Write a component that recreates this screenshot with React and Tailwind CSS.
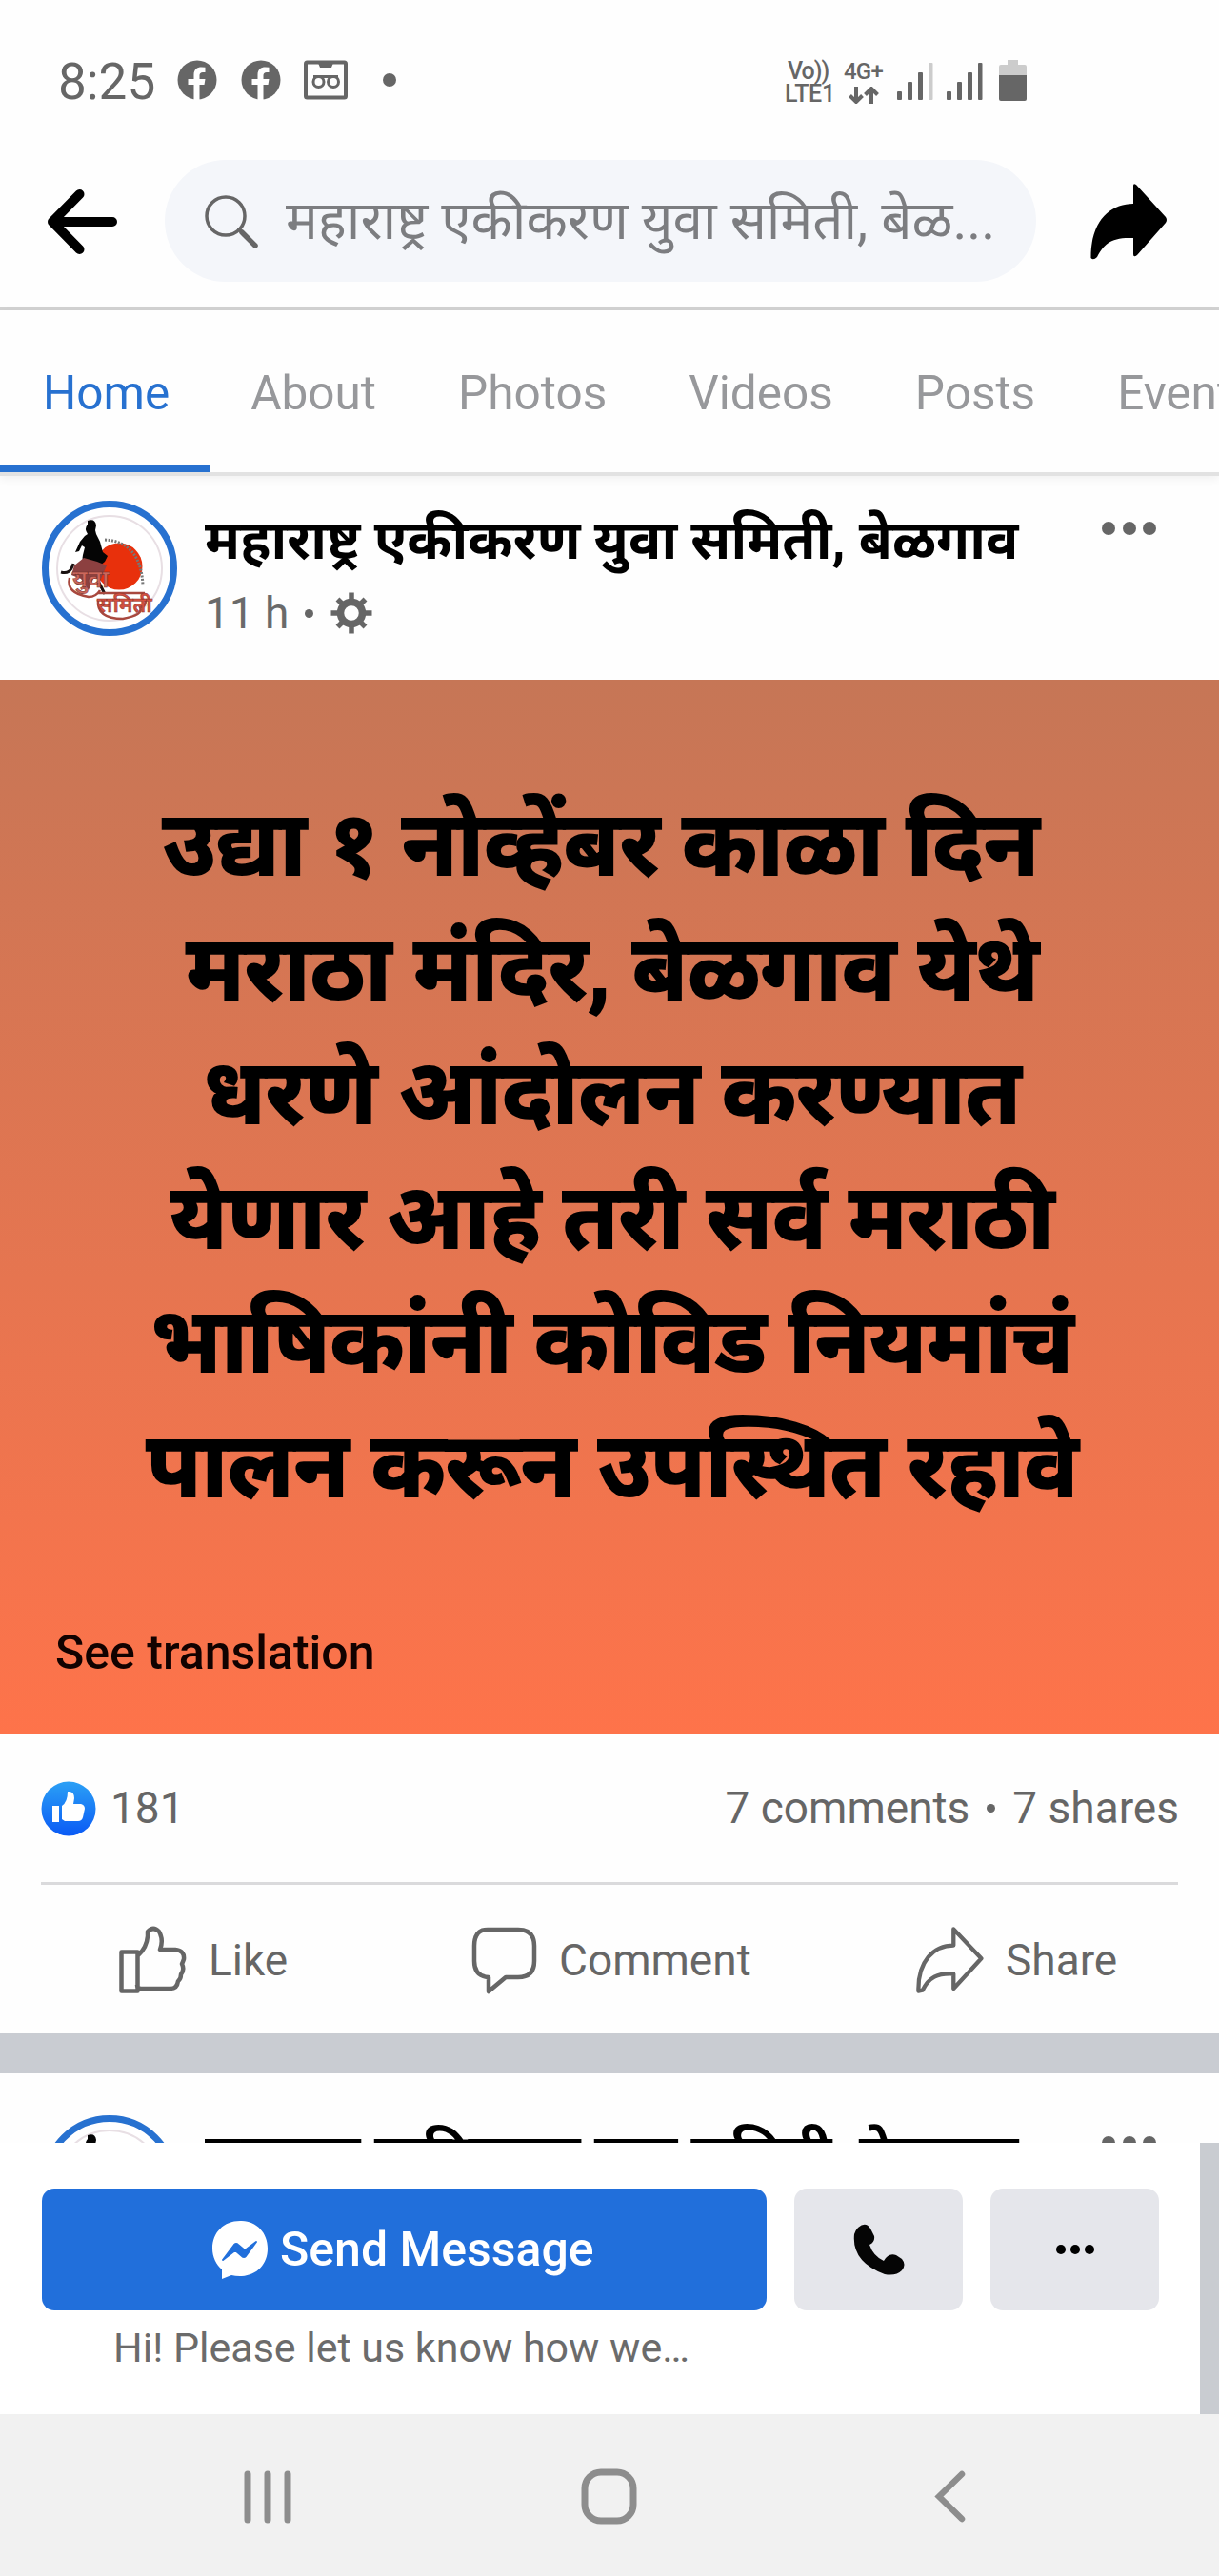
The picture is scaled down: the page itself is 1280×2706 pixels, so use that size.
const SHARE_SOLID = "M1.5 79C1 40 22 22 46 22V3q0-3 3-1l31 34q2 3 0 6L50 76q-4 3-4-1V58C26 57 16 62 8 78q-4 4-6.500 1z";

const tabs = ["Home", "About", "Photos", "Videos", "Posts", "Events"];

const message = [
  "उद्या १ नोव्हेंबर काळा दिन",
  "मराठा मंदिर, बेळगाव येथे",
  "धरणे आंदोलन करण्यात",
  "येणार आहे तरी सर्व मराठी",
  "भाषिकांनी कोविड नियमांचं",
  "पालन करून उपस्थित रहावे",
];

function FacebookGlyph() {
  return (
    <svg className="w-[42px] h-[42px]" viewBox="0 0 42 42">
      <circle cx="21" cy="21" r="20.500" fill="#666" />
      <path d="M17.500 42V26h-6v-6h6v-4.500c0-5.500 3.500-8 8-8l4 .3v5.200h-2.500c-2.500 0-3.500 1.300-3.500 3.300V20h6l-1 6h-5v16z" fill="#fff" />
    </svg>
  );
}

function Signal({ dim }) {
  return (
    <svg className="w-[38px] h-[40px]" viewBox="0 0 38 40" fill="#666">
      <rect x="0" y="31" width="5" height="9" rx="1" />
      <rect x="11" y="21" width="5" height="19" rx="1" />
      <rect x="22" y="11" width="5" height="29" rx="1" />
      <rect x="33" y="1" width="4.500" height="39" rx="1" fill={dim ? "#ccc" : "#666"} />
    </svg>
  );
}

function StatusBar() {
  return (
    <div className="flex h-[168px] items-start pt-[63px] text-[#666]">
      <div className="ml-[61px] w-[125px] text-[53px] leading-[47px]">8:25</div>
      <FacebookGlyph />
      <div className="w-[25px]" />
      <FacebookGlyph />
      <svg className="ml-[24px] w-[46px] h-[42px]" viewBox="0 0 46 42" fill="none" stroke="#666">
        <rect x="2" y="2.500" width="42" height="37" rx="1.500" strokeWidth="4" />
        <path d="M15 3h16l-2 5H17z" fill="#666" stroke="none" />
        <circle cx="15.500" cy="23" r="5.500" strokeWidth="3" />
        <circle cx="31" cy="23" r="5.500" strokeWidth="3" />
        <path d="M10 17.500h26" strokeWidth="3" />
      </svg>
      <div className="ml-[37px] mt-[14px] size-[14px] rounded-full bg-[#666]" />
      <div className="ml-[408px] w-[54px] text-[25px] leading-[24px] font-medium tracking-[-0.3px]">
        <div className="pl-[3px] whitespace-nowrap tracking-[-1px]">Vo))</div>
        <div>LTE1</div>
      </div>
      <div className="ml-[8px] w-[42px] text-[24px] leading-[25px] font-medium tracking-[-0.800px]">
        <div>4G+</div>
        <svg className="ml-[5px] mt-[3px] w-[32px] h-[18px]" viewBox="0 0 32 18" fill="none" stroke="#666" strokeWidth="4">
          <path d="M8 0v15M1.500 9.500L8 16l6.500-6.500M24 18V3M17.500 8.500L24 2l6.500 6.500" />
        </svg>
      </div>
      <div className="ml-[14px] mt-[2px] flex gap-[14px]">
        <Signal dim />
        <Signal />
      </div>
      <svg className="ml-[17px] w-[29px] h-[44px]" viewBox="0 0 29 44">
        <path d="M9 0h11v5h7q2 0 2 2v10H0V7q0-2 2-2h7z" fill="#ccc" />
        <path d="M0 16h29v25q0 2-2 2H2q-2 0-2-2z" fill="#666" />
      </svg>
    </div>
  );
}

function Header() {
  return (
    <div className="flex h-[158px] items-start border-b-4 border-[#d2d2d2]">
      <svg className="ml-[48px] mt-[29px] w-[77px] h-[72px]" viewBox="0 0 77 72" fill="none" stroke="#000" strokeWidth="10" strokeLinecap="round" strokeLinejoin="round">
        <path d="M35.500 7L7 36l28.500 29M8 36h62" />
      </svg>
      <div className="ml-[48px] flex h-[128px] w-[915px] items-center rounded-full bg-[#f4f6fa]">
        <svg className="ml-[41px] w-[58px] h-[60px] shrink-0" viewBox="0 0 58 60" fill="none" stroke="#666" strokeLinecap="round">
          <circle cx="23" cy="25" r="20" strokeWidth="3.500" />
          <path d="M37 39l4 4" strokeWidth="3.500" />
          <path d="M40 42l14 14" strokeWidth="5.500" />
        </svg>
        <div className="ml-[28px] text-[56.500px] leading-[76px] whitespace-nowrap text-[#7c7d80]">महाराष्ट्र एकीकरण युवा समिती, बेळ...</div>
      </div>
      <svg className="ml-[56px] mt-[24px] w-[83px] h-[82px]" viewBox="0 0 83 82">
        <path d={SHARE_SOLID} />
      </svg>
    </div>
  );
}

function Avatar() {
  return (
    <svg className="w-[142px] h-[142px] shrink-0" viewBox="0 0 142 142">
      <circle cx="71" cy="71" r="67.500" fill="#fff" stroke="#2771d0" strokeWidth="7" />
      <circle cx="71" cy="71" r="55" fill="none" stroke="#e8dfe4" strokeWidth="2" />
      <circle cx="81" cy="69" r="24.500" fill="#e8300c" />
      <path d="M48 21q8-3 9 5l-1 5 1 4 4 8 3 11 5 4-3 6-5 4H47q-6-4-4-11l2-8-3-2-3 6-4 1 5-11 5-6 3-2q-4-6 0-10z" fill="#050505" />
      <path d="M20 75q10 3 13-9M60 86l6 12" fill="none" stroke="#181010" strokeWidth="3" />
      <path d="M34 68l10-8 14 4 10 4-6 14-8 0-5 12-8-12-10-4z" fill="#8c4040" />
      <path d="M29 81q-4 16 20 20 8 0 12-7M59 104q-2 20 26 20 22-4 18-12 6 0 6-8M58 97h50" fill="none" stroke="#a8483e" strokeWidth="2.500" />
      <text x="32" y="91" fontSize="26" fontWeight="600" fill="#cd675b" stroke="#71302c" strokeWidth=".5">युवा</text>
      <text x="58" y="117" fontSize="23" fontWeight="600" fill="#d4503f" stroke="#8d352d" strokeWidth=".5">समिती</text>
      <path d="M66 41q38 2 40 48" fill="none" stroke="#777" strokeWidth="3" strokeDasharray="2 1.500" />
    </svg>
  );
}

function PostHeader() {
  return (
    <div className="flex items-start pl-[44px]">
      <Avatar />
      <div className="ml-[29px] w-[930px]">
        <div className="pt-[4px] text-[57px] leading-[76px] font-bold whitespace-nowrap text-black">महाराष्ट्र एकीकरण युवा समिती, बेळगाव</div>
        <div className="mt-[9px] flex items-center text-[46px] leading-[58px] text-[#6a6a6a]">
          11 h
          <div className="ml-[17px] size-[9px] rounded-full bg-[#666]" />
          <svg className="ml-[18px] w-[44px] h-[44px]" viewBox="-22 -22 44 44" fill="none" stroke="#666">
            <circle r="11.500" strokeWidth="7.500" />
            <path d="M0-21.500V-12M0 21.500V12M-21.500 0H-12M21.500 0H12M-14.500-14.500l6 6M14.500 14.500l-6-6M-14.500 14.500l6-6M14.500-14.500l-6 6" strokeWidth="5.500" />
          </svg>
        </div>
      </div>
      <div className="mt-[22px] ml-[12px] flex gap-[7.500px]">
        <div className="size-[14px] rounded-full bg-[#666]" />
        <div className="size-[14px] rounded-full bg-[#666]" />
        <div className="size-[14px] rounded-full bg-[#666]" />
      </div>
    </div>
  );
}

function Actions() {
  return (
    <div className="flex h-[156px] items-start pt-[43px] text-[46px] leading-[56px] text-[#666]">
      <svg className="ml-[124px] w-[72px] h-[72px]" viewBox="0 0 72 72" fill="none" stroke="#666" strokeWidth="4.500" strokeLinejoin="round">
        <path d="M3.500 27.500h17v41h-17zM21 31q9-8 10-20V6q6-6 12 0 5 9 1 19h16q10 1 9 10-1 3-2 5 3 6-1 11 0 5-3 7-1 8-8 8H24q-4 0-4-4" />
      </svg>
      <div className="ml-[23px] mt-[8px] w-[274px]">Like</div>
      <svg className="w-[72px] h-[72px]" viewBox="0 0 72 72" fill="none" stroke="#666" strokeWidth="4.500" strokeLinejoin="round">
        <path d="M19 4h32q17 0 17 17v16q0 17-17 17H38L20 69V54q-15-1-15-17V21Q5 4 19 4z" />
      </svg>
      <div className="ml-[22px] mt-[8px] w-[373px]">Comment</div>
      <svg className="w-[74px] h-[72px]" viewBox="-2 -1 86 84" fill="none" stroke="#666" strokeWidth="5" strokeLinejoin="round">
        <path d="M3 79C2 42 22 23 46 23V3l34 36-34 37V58C26 57 16 62 8 78z" />
      </svg>
      <div className="ml-[22px] mt-[8px]">Share</div>
    </div>
  );
}

function ContactBar() {
  return (
    <div className="flex h-[285px]">
      <div className="w-[1260px] bg-white pl-[44px] pt-[48px]">
        <div className="flex gap-[29px]">
          <div className="flex h-[128px] w-[761px] items-center rounded-[13px] bg-[#216fdb] text-[50px] font-medium text-white">
            <svg className="ml-[178px] w-[60px] h-[62px]" viewBox="0 0 60 62">
              <path d="M30 1C13 1 1 13 1 30c0 9 4 17 10 22v10l10-4q4 1 9 1c17 0 29-12 29-29S47 1 30 1z" fill="#fff" />
              <path d="M12 42l12-16q2-2 4 0l7 6 12-9-11 15q-2 2-4 0l-7-6z" fill="#216fdb" stroke="#216fdb" strokeWidth="2" strokeLinejoin="round" />
            </svg>
            <div className="ml-[12px]">Send Message</div>
          </div>
          <div className="flex h-[128px] w-[177px] items-center justify-center rounded-[13px] bg-[#e5e6eb]">
            <svg className="w-[54px] h-[54px]" viewBox="0 0 54 54">
              <path d="M5 4q8-7 13 1l4 8q1 6-5 9 4 12 15 17 5-9 13-6l6 4q5 6 0 12-6 6-18 4Q-2 40 1 11q1-4 4-7z" fill="#050505" />
            </svg>
          </div>
          <div className="flex h-[128px] w-[177px] items-center justify-center gap-[5px] rounded-[13px] bg-[#e5e6eb]">
            <div className="size-[10px] rounded-full bg-black" />
            <div className="size-[10px] rounded-full bg-black" />
            <div className="size-[10px] rounded-full bg-black" />
          </div>
        </div>
        <div className="mt-[14px] ml-[75px] text-[43px] leading-[50px] text-[#6b6b6b]">Hi! Please let us know how we…</div>
      </div>
      <div className="flex-1 bg-[#c9ccd1]" />
    </div>
  );
}

export default function App() {
  return (
    <div className="h-[2706px] w-[1280px] overflow-hidden bg-[#fefefe] font-[Roboto,'Noto_Sans_Devanagari','Noto_Sans',sans-serif]">
      <StatusBar />
      <Header />

      {/* Tabs */}
      <div className="flex h-[174px] overflow-hidden border-b-4 border-[#e2e2e2] text-[49.500px] leading-[58px] text-[#97989b] shadow-[0_3px_10px_rgba(0,0,0,0.06)]">
        {tabs.map((tab, i) => (
          <div key={tab} className={i === 0 ? "shrink-0 pl-[45px] pr-[42px] pt-[58px] border-b-8 border-[#2771d0] text-[#2771d0]" : "shrink-0 px-[43px] pt-[58px]"}>
            {tab}
          </div>
        ))}
      </div>

      {/* Post */}
      <div className="h-[214px] pt-[26px]">
        <PostHeader />
      </div>
      <div className="h-[1108px] bg-linear-to-b from-[#c67656] to-[#fe734a] pt-[108px]">
        <div className="h-[783px] pl-[6px] text-center text-[94px] leading-[130.500px] font-bold text-black [-webkit-text-stroke:2px_black]">
          {message.map((line, i) => (
            <div key={line} className={i === 0 ? "-ml-[24px] text-[95px] whitespace-nowrap" : "whitespace-nowrap"}>{line}</div>
          ))}
        </div>
        <div className="mt-[102px] ml-[58px] text-[50px] leading-[58px] font-medium text-[#120200]">See translation</div>
      </div>
      <div className="mx-[43px] flex h-[158px] items-start border-b-3 border-[#dadadc] pt-[49px] text-[46px] leading-[56px] text-[#666]">
        <svg className="w-[58px] h-[58px]" viewBox="0 0 58 58">
          <defs>
            <linearGradient id="like" x1="0" y1="0" x2="0" y2="1">
              <stop offset="0" stopColor="#2ba0f5" />
              <stop offset="1" stopColor="#0a5af5" />
            </linearGradient>
          </defs>
          <circle cx="29" cy="29" r="28.500" fill="url(#like)" />
          <path d="M12 26h7v17h-7zM22 26q6-4 6-15 7-1 7 7l-1 6h8q4 1 4 5l-2 9q-1 4-5 4H25l-3-2z" fill="#fff" />
        </svg>
        <div className="ml-[15px] flex-1">181</div>
        <div>7 comments</div>
        <div className="mx-[18px] mt-[24px] size-[9px] rounded-full bg-[#666]" />
        <div className="-mr-px">7 shares</div>
      </div>
      <Actions />

      {/* Next post, cut off by the contact bar */}
      <div className="h-[42px] bg-[#c9ccd2]" />
      <div className="h-[73px] overflow-hidden pt-[44px]">
        <PostHeader />
      </div>
      <ContactBar />

      {/* Android navigation */}
      <div className="flex h-[170px] items-start bg-[#f1f1f1] pt-[57px]">
        <svg className="ml-[256px] w-[50px] h-[58px]" viewBox="0 0 50 58" stroke="#8d8d8d" strokeWidth="7" strokeLinecap="round">
          <path d="M4 6v48M25 6v48M46 6v48" />
        </svg>
        <svg className="ml-[304px] w-[60px] h-[60px]" viewBox="0 0 60 60" fill="none" stroke="#8d8d8d" strokeWidth="7">
          <rect x="4" y="4" width="51" height="51" rx="17" />
        </svg>
        <svg className="ml-[311px] w-[34px] h-[60px]" viewBox="0 0 34 60" fill="none" stroke="#8d8d8d" strokeWidth="6.500" strokeLinecap="round">
          <path d="M29 6L5 29.500 29 53" />
        </svg>
      </div>
    </div>
  );
}
